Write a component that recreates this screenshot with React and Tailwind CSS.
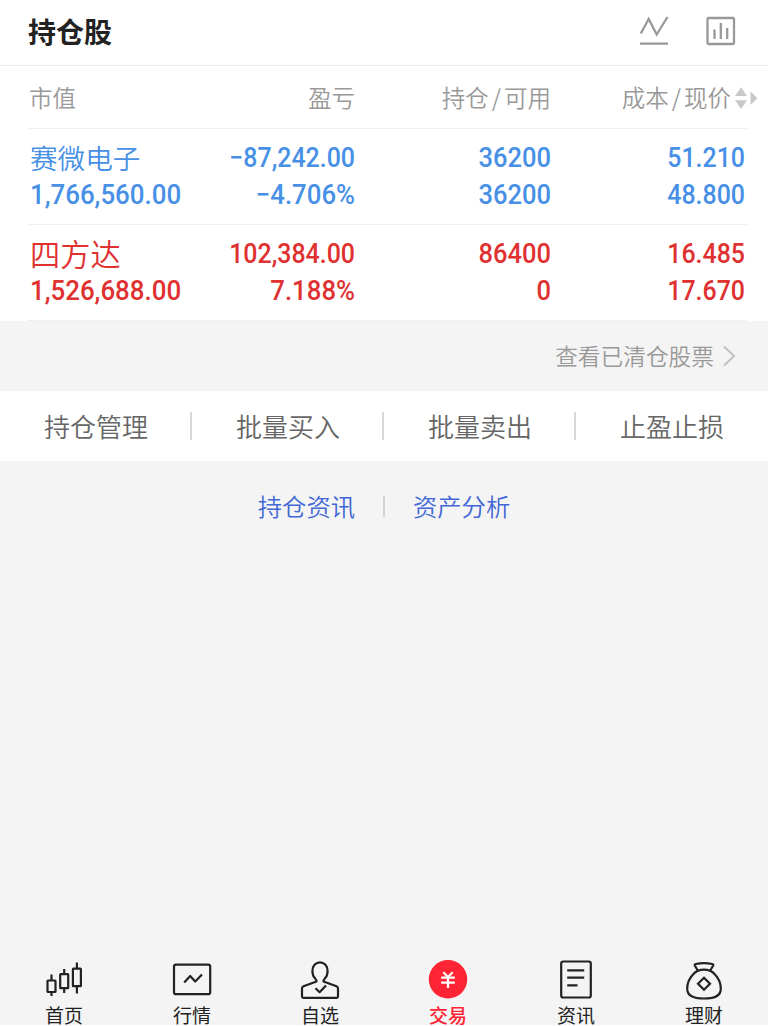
import React from 'react';
import clsx from 'clsx';

const holdings = [
  {
    name: '赛微电子',
    value: '1,766,560.00',
    profit: '−87,242.00',
    rate: '−4.706%',
    amount: '36200',
    usable: '36200',
    cost: '51.210',
    price: '48.800',
    color: 'text-[#4790e6]',
    nameSize: 'text-[27.6px]',
  },
  {
    name: '四方达',
    value: '1,526,688.00',
    profit: '102,384.00',
    rate: '7.188%',
    amount: '86400',
    usable: '0',
    cost: '16.485',
    price: '17.670',
    color: 'text-[#e03131]',
    nameSize: 'text-[30.2px]',
  },
];

const actions = ['持仓管理', '批量买入', '批量卖出', '止盈止损'];

const Num = ({ children, className = 'origin-right text-right scale-x-[0.89]' }) => (
  <span
    className={clsx(
      'block whitespace-nowrap font-[Roboto,sans-serif] text-[28px] font-medium leading-[37px]',
      className
    )}
  >
    {children}
  </span>
);

const HoldingRow = ({ item }) => (
  <div
    className={clsx(
      'ml-7 mr-[21px] flex h-24 border-b border-[#f0f0f0] pt-[10px] pr-[2px]',
      item.color
    )}
  >
    <div className="w-[172px] pl-px">
      <div className={clsx('h-[37px] whitespace-nowrap pl-px font-[350] leading-[36px]', item.nameSize)}>
        {item.name}
      </div>
      <Num className="origin-left pl-px scale-x-[0.925]">{item.value}</Num>
    </div>
    <div className="w-[155px]">
      <Num>{item.profit}</Num>
      <Num className="origin-right text-right scale-x-[0.92]">{item.rate}</Num>
    </div>
    <div className="w-[196px]">
      <Num className="origin-right text-right scale-x-[0.91]">{item.amount}</Num>
      <Num className="origin-right text-right scale-x-[0.91]">{item.usable}</Num>
    </div>
    <div className="flex-1">
      <Num>{item.cost}</Num>
      <Num>{item.price}</Num>
    </div>
  </div>
);

const Icon = ({ children }) => (
  <svg
    width="44"
    height="44"
    viewBox="0 0 44 44"
    fill="none"
    stroke="#222"
    strokeWidth="2.2"
    strokeLinecap="round"
    strokeLinejoin="round"
    className="shrink-0"
  >
    {children}
  </svg>
);

const tabs = [
  {
    label: '首页',
    icon: (
      <Icon>
        <g strokeLinecap="butt">
          <rect x="5.5" y="20.5" width="8" height="11.5" rx="0.5" />
          <path d="M9.500 14.500v6M9.500 32v4" />
          <rect x="18.200" y="14.200" width="8" height="14" rx="0.500" />
          <path d="M22.200 9v5.200M22.200 28.200v4.800" />
          <rect x="30.900" y="8.700" width="8" height="17.500" rx="0.500" />
          <path d="M34.900 2.500v6.200M34.900 26.200v7.300" />
        </g>
      </Icon>
    ),
  },
  {
    label: '行情',
    icon: (
      <Icon>
        <rect x="4" y="4.700" width="36.200" height="29.500" rx="2" />
        <path d="M14.200 22.500l6-6.500 5 5.500 6.800-7" strokeLinecap="butt" />
      </Icon>
    ),
  },
  {
    label: '自选',
    icon: (
      <Icon>
        <path d="M18.500 21.500c.3-1.300-.4-2-1.500-3.200-1.700-1.800-2.600-4-2.600-7.300 0-5 3.200-8.600 7.600-8.600s7.600 3.600 7.600 8.600c0 3.300-.9 5.500-2.600 7.300-1.100 1.200-1.800 1.900-1.500 3.200l13 4.700c1.200.5 1.500 1.100 1.500 2.300v8c0 .9-.5 1.300-1.400 1.300H5.400c-.9 0-1.400-.4-1.400-1.300v-8c0-1.200.3-1.800 1.500-2.300z" />
        <path d="M17.500 28.200l4.100 4 6.400-6.700" strokeLinecap="butt" />
      </Icon>
    ),
  },
  {
    label: '交易',
    active: true,
    icon: (
      <Icon>
        <circle cx="22" cy="19.300" r="19.200" fill="#ff2433" stroke="none" />
        <path
          d="M17.300 12.300l4.700 4.700 4.700-4.700M15.200 17.700h13.600M15.200 22.600h13.600M22 17v11"
          stroke="#fff"
          strokeLinecap="butt"
          strokeWidth="2.300"
        />
      </Icon>
    ),
  },
  {
    label: '资讯',
    icon: (
      <Icon>
        <rect x="7.200" y="1.500" width="29.600" height="36" rx="2" />
        <path d="M13.200 10.300h17M13.200 17.700h17M13.200 25.300h10.300" strokeLinecap="butt" />
      </Icon>
    ),
  },
  {
    label: '理财',
    icon: (
      <Icon>
        <path d="M15.800 10.500l-2.900-4.800c-.5-.9 0-1.500.8-1.700 5.300-1 11.300-1 16.600 0 .8.200 1.300.8.800 1.700l-2.900 4.800" />
        <path d="M22 9.700c-4.500 0-8 1.500-11 4.700-3.600 3.800-5.800 9-5.800 14.300 0 6.500 4.500 9.800 16.800 9.800s16.800-3.300 16.800-9.800c0-5.300-2.200-10.500-5.800-14.300-3-3.200-6.500-4.700-11-4.700z" />
        <path d="M22 17.700l6 6-6 6-6-6z" strokeLinejoin="miter" />
      </Icon>
    ),
  },
];

const App = () => {
  return (
    <div className="flex h-[1026px] w-[768px] flex-col border-b border-white bg-[#f4f4f4] font-['Noto_Sans_CJK_SC',sans-serif]">
      <header className="flex h-[66px] items-center border-b border-[#eee] bg-white pl-7 pr-8">
        <h1 className="flex-1 pb-1 text-[28px] font-bold leading-none text-[#222]">持仓股</h1>
        <svg
          width="32"
          height="32"
          viewBox="0 0 32 32"
          fill="none"
          stroke="#999"
          strokeWidth="2.300"
          className="mr-[34px] -mt-[3px]"
        >
          <path d="M2.800 18.500L10.700 4l8 15.500L29.500 2M2 28.700h28" />
        </svg>
        <svg
          width="32"
          height="32"
          viewBox="0 0 32 32"
          fill="none"
          stroke="#999"
          strokeWidth="2.300"
          className="-mt-[3px]"
        >
          <rect x="3.500" y="3" width="26.500" height="26" rx="1" />
          <path d="M10.500 14.500V24M16.800 8v16M23.200 13v11" />
        </svg>
      </header>

      <section className="bg-white">
        <div className="ml-7 mr-[21px] flex h-[63px] items-center border-b border-[#f0f0f0] pt-0.5 text-[23.500px] font-[350] text-[#999]">
          <div className="w-[172px] pl-px">市值</div>
          <div className="w-[155px] text-right">盈亏</div>
          <div className="w-[196px] text-right">
            持仓<span className="mx-[3px]">/</span>可用
          </div>
          <div className="flex-1 whitespace-nowrap pr-[17px] text-right">
            成本<span className="mx-[3px]">/</span>现价
          </div>
          <svg width="24" height="24" viewBox="0 0 24 24" fill="#c8c8c8" className="-ml-[14px] -mr-[11px] shrink-0">
            <path d="M1 10L7 1.200l6 8.800zM1 14.200h12L7 23zM16.500 5.500l7 6.700-7 6.700z" />
          </svg>
        </div>
        {holdings.map((item) => (
          <HoldingRow key={item.name} item={item} />
        ))}
      </section>

      <div className="flex h-[70px] items-center justify-end pr-8 text-[22.700px] font-[350] text-[#999]">
        <span>查看已清仓股票</span>
        <svg width="14" height="24" viewBox="0 0 14 24" fill="none" stroke="#c4c4c4" strokeWidth="2.200" className="ml-2">
          <path d="M2 2.500L12 12 2 21.500" />
        </svg>
      </div>

      <div className="grid h-[70px] grid-cols-4 items-center bg-white pb-px text-[26px] font-[350] text-[#666]">
        {actions.map((label, i) => (
          <div
            key={label}
            className={clsx(
              'flex h-7 items-center justify-center border-r-2 pl-0.5',
              i < 3 ? 'border-[#d8d8d8]' : 'border-transparent'
            )}
          >
            {label}
          </div>
        ))}
      </div>

      <div className="mt-[33px] flex items-center justify-center text-[24.300px] font-[350] leading-6 text-[#4267d6]">
        <span>持仓资讯</span>
        <i className="mx-7 h-[21px] w-0.5 bg-[#d4d4d4]" />
        <span>资产分析</span>
      </div>

      <nav className="mt-auto grid h-[65px] grid-cols-6">
        {tabs.map((tab) => (
          <div
            key={tab.label}
            className={clsx(
              'flex flex-col items-center text-[19px] leading-[22px]',
              tab.active ? 'font-medium text-[#ff2433]' : 'text-[#222]'
            )}
          >
            {tab.icon}
            <span>{tab.label}</span>
          </div>
        ))}
      </nav>
    </div>
  );
};

export default App;
